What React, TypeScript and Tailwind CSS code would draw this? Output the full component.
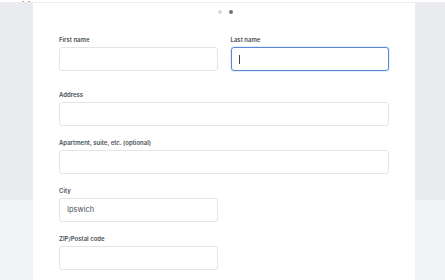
const font = { fontFamily: "Inter, 'Noto Sans', sans-serif" };

function Field({ label, value, focused, className = "" }: { label: string; value?: string; focused?: boolean; className?: string }) {
  return (
    <div className={`flex flex-col ${className}`}>
      <label className="h-[8px] text-[6px] leading-[8px] font-semibold text-[#4a4f57]">{label}</label>
      <div
        className={`mt-[3px] flex h-[24px] items-center rounded-[3px] bg-white px-[7px] text-[7.5px] text-[#4b5058] ${
          focused ? "border-[1.5px] border-[#5a8ad6] shadow-[0_0_0_1px_rgba(90,138,214,0.15)]" : "border border-[#e3e5e8]"
        }`}
      >
        {value}
        {focused && <span className="h-[9px] w-px bg-[#444]" />}
      </div>
    </div>
  );
}

export default function App() {
  return (
    <div
      className="flex h-[280px] w-[445px] flex-col overflow-hidden bg-[linear-gradient(#e9ebee_0,#e9ebee_200px,#f3f4f6_200px)]"
      style={font}
    >
      <div className="flex h-[3px] shrink-0 items-end gap-[4px] border-b border-[#eceef0] bg-white pl-[22px]">
        <span className="h-[1px] w-[2px] bg-[#e0a0b0]" />
        <span className="h-[1px] w-[2px] bg-[#b0a898]" />
      </div>
      <div className="ml-[33px] flex w-[382px] flex-1 flex-col bg-white px-[26px] pt-[7px]">
        <div className="flex justify-center gap-[7px] pl-[2px]">
          <span className="h-[4px] w-[4px] rounded-full bg-[#d6d8db]" />
          <span className="h-[4px] w-[4px] rounded-full bg-[#6f7379]" />
        </div>
        <div className="mt-[22px] grid grid-cols-2 gap-x-[13px]">
          <Field label="First name" />
          <Field label="Last name" focused />
        </div>
        <div className="mt-[20px] flex flex-col gap-[13px]">
          <Field label="Address" />
          <Field label="Apartment, suite, etc. (optional)" />
          <Field label="City" value="Ipswich" className="w-[159px]" />
          <Field label="ZIP/Postal code" className="w-[159px]" />
        </div>
      </div>
    </div>
  );
}
